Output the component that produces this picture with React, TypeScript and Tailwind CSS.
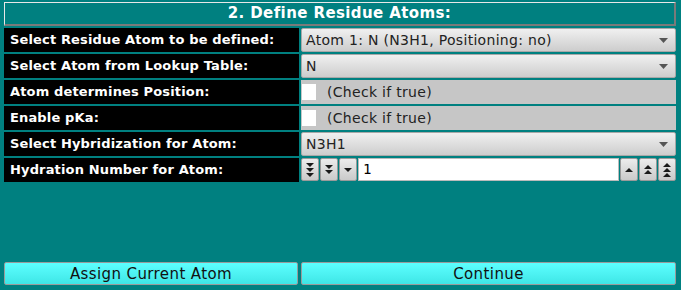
import React from 'react'

const font = "font-['DejaVu_Sans',sans-serif]"

function Arrows({ count, up }: { count: number; up?: boolean }) {
  const h = count * 5 - 1
  return (
    <svg width="10" height={h} viewBox={`0 0 10 ${h}`}>
      {Array.from({ length: count }).map((_, i) => {
        const y = i * 5
        return up ? (
          <polygon key={i} points={`1,${y + 4} 9,${y + 4} 5,${y}`} fill="#1a1a1a" />
        ) : (
          <polygon key={i} points={`1,${y} 9,${y} 5,${y + 4}`} fill="#1a1a1a" />
        )
      })}
    </svg>
  )
}

function SpinButton({ count, up }: { count: number; up?: boolean }) {
  return (
    <div className="w-[18px] h-full flex items-center justify-center rounded-[2px] border border-[#9a9a9a] bg-gradient-to-b from-[#ececec] to-[#cacaca]">
      <Arrows count={count} up={up} />
    </div>
  )
}

function Select({ value }: { value: string }) {
  return (
    <div className="flex-1 h-full flex items-center justify-between rounded-[2px] border border-[#a8a8a8] bg-gradient-to-b from-[#f0f0f0] to-[#cdcdcd] pl-[4px] pr-[7px] text-[14px] tracking-[0.3px] text-[#222]">
      <span>{value}</span>
      <svg width="9" height="5" viewBox="0 0 9 5">
        <polygon points="0,0 9,0 4.5,5" fill="#555" />
      </svg>
    </div>
  )
}

function Check() {
  return (
    <div className="flex-1 h-full flex items-center bg-[#c6c6c6] text-[14px] tracking-[0.3px] text-[#222]">
      <div className="w-[14px] h-[16px] bg-white ml-[1px]" />
      <span className="ml-[11px]">(Check if true)</span>
    </div>
  )
}

function Row({ label, children }: { label: string; children: React.ReactNode }) {
  return (
    <div className="flex gap-[2px] h-[24px]">
      <div className="w-[295px] shrink-0 bg-black text-white font-bold text-[13px] tracking-[0.15px] pl-[6px] flex items-center">
        {label}
      </div>
      <div className="flex-1 flex">{children}</div>
    </div>
  )
}

export default function App() {
  return (
    <div className={`w-[681px] h-[290px] bg-[#008080] flex flex-col pl-[4px] pr-[5px] pt-[2px] pb-[5px] ${font}`}>
      {/* Title */}
      <div className="h-[24px] shrink-0 flex items-center justify-center border-t border-l border-[#e8e8e8] border-r-2 border-b-2 border-r-[#7a7a7a] border-b-[#7a7a7a] text-white font-bold text-[15px] tracking-[0.4px]">
        2. Define Residue Atoms:
      </div>

      <div className="mt-[2px] flex flex-col gap-[2px]">
        <Row label="Select Residue Atom to be defined:">
          <Select value="Atom 1: N (N3H1, Positioning: no)" />
        </Row>
        <Row label="Select Atom from Lookup Table:">
          <Select value="N" />
        </Row>
        <Row label="Atom determines Position:">
          <Check />
        </Row>
        <Row label="Enable pKa:">
          <Check />
        </Row>
        <Row label="Select Hybridization for Atom:">
          <Select value="N3H1" />
        </Row>
        <Row label="Hydration Number for Atom:">
          <div className="flex-1 flex h-[23px] gap-[1px]">
            <SpinButton count={3} />
            <SpinButton count={2} />
            <SpinButton count={1} />
            <div className="flex-1 bg-white flex items-center pl-[4px] text-[14px] text-black font-['DejaVu_Sans_Mono',monospace] border border-[#bbbbbb]">
              1
            </div>
            <SpinButton count={1} up />
            <SpinButton count={2} up />
            <SpinButton count={3} up />
          </div>
        </Row>
      </div>

      <div className="flex-1" />

      {/* Actions */}
      <div className="flex gap-[3px] h-[23px]">
        <button className="w-[294px] h-full rounded-[2px] border border-[#9a9a9a] bg-gradient-to-b from-[#5cffff] to-[#3ee6e6] text-[15px] tracking-[0.4px] text-[#111]">
          Assign Current Atom
        </button>
        <button className="flex-1 h-full rounded-[2px] border border-[#9a9a9a] bg-gradient-to-b from-[#5cffff] to-[#3ee6e6] text-[15px] tracking-[0.4px] text-[#111]">
          Continue
        </button>
      </div>
    </div>
  )
}
